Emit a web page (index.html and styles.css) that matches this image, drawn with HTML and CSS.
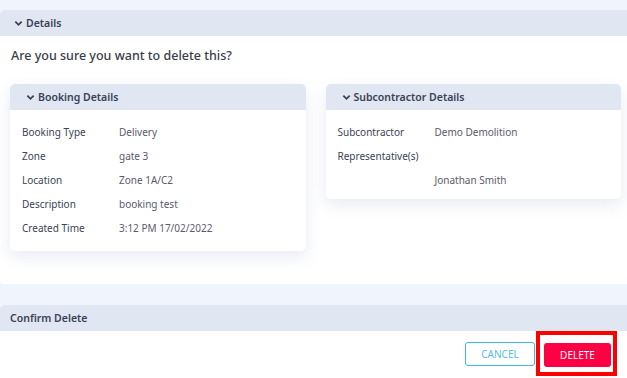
FILE: index.html
```html
<!DOCTYPE html>
<html>
<head>
<meta charset="utf-8">
<title>Delete booking</title>
<link rel="stylesheet" href="styles.css">
</head>
<body>
	<div class="page">
		<div class="section-head">
			<svg class="chevron" viewBox="0 0 10 10"><polyline points="1.5,3 5,6.5 8.5,3"/></svg>
			Details
		</div>
		<div class="section-body">
			<p class="question">Are you sure you want to delete this?</p>
			<div class="cards">
				<div class="card">
					<div class="card-head">
						<svg class="chevron" viewBox="0 0 10 10"><polyline points="1.5,3 5,6.5 8.5,3"/></svg>
						Booking Details
					</div>
					<div class="card-body">
						<div class="row"><span class="label">Booking Type</span><span class="value">Delivery</span></div>
						<div class="row"><span class="label">Zone</span><span class="value">gate 3</span></div>
						<div class="row"><span class="label">Location</span><span class="value">Zone 1A/C2</span></div>
						<div class="row"><span class="label">Description</span><span class="value">booking test</span></div>
						<div class="row"><span class="label">Created Time</span><span class="value">3:12 PM 17/02/2022</span></div>
					</div>
				</div>
				<div class="card">
					<div class="card-head">
						<svg class="chevron" viewBox="0 0 10 10"><polyline points="1.5,3 5,6.5 8.5,3"/></svg>
						Subcontractor Details
					</div>
					<div class="card-body card-body-short">
						<div class="row"><span class="label">Subcontractor</span><span class="value">Demo Demolition</span></div>
						<div class="row"><span class="label">Representative(s)</span><span class="value"></span></div>
						<div class="row"><span class="label"></span><span class="value">Jonathan Smith</span></div>
					</div>
				</div>
			</div>
		</div>
		<div class="section-head section-head-plain">Confirm Delete</div>
		<div class="footer">
			<button class="btn btn-cancel">Cancel</button>
			<span class="highlight"><button class="btn btn-delete">Delete</button></span>
		</div>
	</div>
</body>
</html>
```

FILE: styles.css
```css
* {
	margin: 0;
	padding: 0;
	box-sizing: border-box;
}
html,body {
	width: 100%;
	height: 100%;
	background: #f0f4fd;
	font-family: "Noto Sans", "Open Sans", sans-serif;
	color: #3a4256;
}
.page {
	min-height: 100%;
	display: flex;
	flex-direction: column;
	padding-top: 10px;
}
.section-head {
	height: 26px;
	flex-shrink: 0;
	display: flex;
	align-items: center;
	padding-left: 14px;
	background: #e0e6f2;
	border-radius: 5px 0 0 0;
	font-size: 10.5px;
	font-weight: 600;
	color: #3a4256;
}
.section-head-plain {
	margin-top: 21px;
	padding-left: 10px;
}
.chevron {
	width: 9px;
	height: 9px;
	margin-right: 3px;
	fill: none;
	stroke: #3a4256;
	stroke-width: 2;
}
.section-body {
	background: #fff;
	padding: 11px 6px 33px 10px;
	border-radius: 0 0 0 4px;
}
.question {
	font-size: 12.5px;
	line-height: 18px;
	font-weight: 500;
	color: #3a3d4a;
	margin: 0 0 19px 1px;
}
.cards {
	display: flex;
	align-items: flex-start;
	gap: 20px;
}
.card {
	flex: 1;
	background: #fff;
	border-radius: 5px;
	box-shadow: 0 6px 16px rgba(90, 110, 170, .14);
}
.card-head {
	height: 26px;
	display: flex;
	align-items: center;
	padding-left: 16px;
	background: #e0e6f2;
	border-radius: 5px 5px 0 0;
	font-size: 10.5px;
	font-weight: 600;
}
.card-body {
	padding: 10px 12px 11px;
}
.card-body-short {
	padding-bottom: 7px;
}
.row {
	display: flex;
	align-items: center;
	height: 24px;
	font-size: 10px;
}
.label {
	width: 97px;
	flex-shrink: 0;
	color: #3c4257;
}
.value {
	color: #5c5a6c;
}
.footer {
	flex: 1;
	background: #fff;
	display: flex;
	justify-content: flex-end;
	align-items: flex-start;
	padding-right: 10px;
}
.btn {
	height: 24px;
	font-family: inherit;
	font-size: 10px;
	text-transform: uppercase;
	border-radius: 3px;
	cursor: pointer;
}
.btn-cancel {
	width: 70px;
	margin-top: 11px;
	margin-right: 1px;
	background: #fff;
	border: 1px solid #3cb8da;
	color: #52bde0;
}
.highlight {
	display: block;
	border: 4px solid #ff0000;
	padding: 7px 2px 5px 4px;
}
.btn-delete {
	width: 67px;
	background: #ff0044;
	border: none;
	color: #fff;
}
```
